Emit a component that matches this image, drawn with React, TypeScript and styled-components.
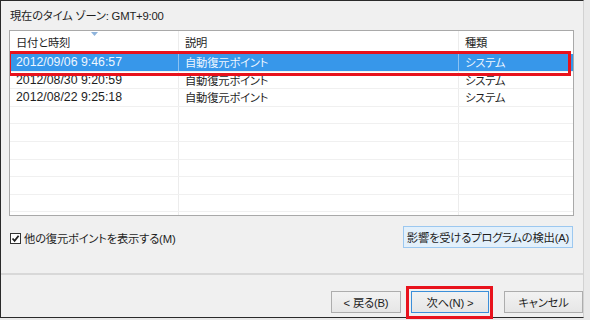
import * as React from "react";
import styled, { createGlobalStyle } from "styled-components";

const GlobalStyle = createGlobalStyle`
  html, body {
    margin: 0;
    padding: 0;
    background: #e9e9e9;
  }
  body {
    font-family: "Liberation Sans", "Noto Sans CJK JP", sans-serif;
    font-size: 11.3px;
    letter-spacing: -0.2px;
    font-feature-settings: "palt" 1;
    color: #1e1e1e;
  }
`;

const Window = styled.div`
  width: 584px;
  height: 318px;
  box-sizing: border-box;
  background: #f0f0f0;
  border-top: 1px solid #2a2a2a;
  border-left: 1px solid #2a2a2a;
  border-bottom: 1px solid #2a2a2a;
  border-right: 1px solid #d2d2d2;
  display: flex;
  flex-direction: column;
  margin-bottom: 2px;
`;

const Title = styled.div`
  height: 29px;
  padding-left: 9px;
  display: flex;
  align-items: center;
  padding-bottom: 2px;
  box-sizing: border-box;
`;

const ListBox = styled.div`
  position: relative;
  margin-left: 8px;
  width: 565px;
  height: 186px;
  box-sizing: border-box;
  border: 1px solid #a9a9a9;
  background: #fff;
  overflow: hidden;
`;

const Row = styled.div<{ $head?: boolean; $selected?: boolean }>`
  display: grid;
  grid-template-columns: 169px 280px 1fr;
  height: ${(p) => (p.$head ? "23px" : "17.6px")};
  box-sizing: border-box;
  border-bottom: 1px solid ${(p) => (p.$head ? "#fff" : "#f0f0f0")};
  background: ${(p) => (p.$selected ? "#3797ea" : "transparent")};
  color: ${(p) => (p.$selected ? "#eef6ff" : "#1e1e1e")};
`;

const Cell = styled.div<{ $selected?: boolean; $last?: boolean; $latin?: boolean }>`
  position: relative;
  display: flex;
  align-items: center;
  padding-left: 6px;
  white-space: nowrap;
  font-size: ${(p) => (p.$latin ? "12.3px" : "inherit")};
  letter-spacing: ${(p) => (p.$latin ? "0" : "inherit")};
  border-right: ${(p) =>
    p.$last ? "none" : `1px solid ${p.$selected ? "#8cc2f2" : "#ececec"}`};
`;

const SortArrow = styled.svg`
  position: absolute;
  top: 1px;
  left: 81px;
`;

const RowMark = styled.div`
  position: absolute;
  left: -2px;
  top: 20px;
  width: 563px;
  height: 25px;
  box-sizing: border-box;
  border: 3px solid #e8121c;
  pointer-events: none;
`;

const Options = styled.div`
  display: flex;
  align-items: center;
  justify-content: space-between;
  margin-top: 10px;
  padding: 0 10px 0 9px;
  height: 22px;
`;

const CheckLabel = styled.label`
  display: flex;
  align-items: center;
  gap: 3px;
  margin-top: 2px;
`;

const Box = styled.span`
  width: 11px;
  height: 11px;
  box-sizing: border-box;
  border: 1px solid #333;
  background: #fff;
  display: flex;
  align-items: center;
  justify-content: center;
`;

const Button = styled.button<{ $variant?: "hover" | "focus" }>`
  font-family: inherit;
  font-size: inherit;
  letter-spacing: inherit;
  font-feature-settings: inherit;
  color: #1e1e1e;
  height: 22px;
  padding: 0;
  white-space: nowrap;
  box-sizing: border-box;
  border: 1px solid
    ${(p) =>
      p.$variant === "hover"
        ? "#9cc8f0"
        : p.$variant === "focus"
        ? "#3c8fd9"
        : "#adadad"};
  background: ${(p) =>
    p.$variant === "hover"
      ? "#e3f0fb"
      : "linear-gradient(#f2f2f2, #e6e6e6)"};
  display: flex;
  align-items: center;
  justify-content: center;
`;

const Separator = styled.div`
  margin-top: auto;
  height: 2px;
  background: #d8d8d8;
`;

const Footer = styled.div`
  height: 42px;
  display: flex;
  justify-content: flex-end;
  align-items: flex-start;
  padding: 16px 0 0 0;
  box-sizing: border-box;
`;

const NextWrap = styled.div`
  position: relative;
  margin: 0 15px 0 10px;
`;

const NextMark = styled.div`
  position: absolute;
  left: -5px;
  top: -5px;
  right: -4px;
  bottom: -6px;
  border: 3px solid #e8121c;
  pointer-events: none;
`;

const rows = [
  { date: "2012/09/06 9:46:57", desc: "自動復元ポイント", kind: "システム" },
  { date: "2012/08/30 9:20:59", desc: "自動復元ポイント", kind: "システム" },
  { date: "2012/08/22 9:25:18", desc: "自動復元ポイント", kind: "システム" },
  { date: "", desc: "", kind: "" },
  { date: "", desc: "", kind: "" },
  { date: "", desc: "", kind: "" },
  { date: "", desc: "", kind: "" },
  { date: "", desc: "", kind: "" },
  { date: "", desc: "", kind: "" },
  { date: "", desc: "", kind: "" },
];

export default function App() {
  return (
    <>
      <GlobalStyle />
      <Window>
        <Title>現在のタイム ゾーン: GMT+9:00</Title>
        <ListBox>
          <Row $head>
            <Cell>
              日付と時刻
              <SortArrow width="7" height="4" viewBox="0 0 7 4">
                <path d="M0 0 L7 0 L3.5 4 Z" fill="#8fb4dc" />
              </SortArrow>
            </Cell>
            <Cell>説明</Cell>
            <Cell $last>種類</Cell>
          </Row>
          {rows.map((r, i) => (
            <Row key={i} $selected={i === 0}>
              <Cell $selected={i === 0} $latin>
                {r.date}
              </Cell>
              <Cell $selected={i === 0}>{r.desc}</Cell>
              <Cell $selected={i === 0} $last>
                {r.kind}
              </Cell>
            </Row>
          ))}
          <RowMark />
        </ListBox>
        <Options>
          <CheckLabel>
            <Box>
              <svg width="9" height="9" viewBox="0 0 9 9">
                <path
                  d="M1.5 4.5 L3.6 6.8 L7.6 1.8"
                  stroke="#222"
                  strokeWidth="1.8"
                  fill="none"
                />
              </svg>
            </Box>
            他の復元ポイントを表示する(M)
          </CheckLabel>
          <Button $variant="hover" style={{ width: 170 }}>
            影響を受けるプログラムの検出(A)
          </Button>
        </Options>
        <Separator />
        <Footer>
          <Button style={{ width: 70 }}>&lt; 戻る(B)</Button>
          <NextWrap>
            <Button $variant="focus" style={{ width: 78 }}>
              次へ(N) &gt;
            </Button>
            <NextMark />
          </NextWrap>
          <Button style={{ width: 79 }}>キャンセル</Button>
        </Footer>
      </Window>
    </>
  );
}
